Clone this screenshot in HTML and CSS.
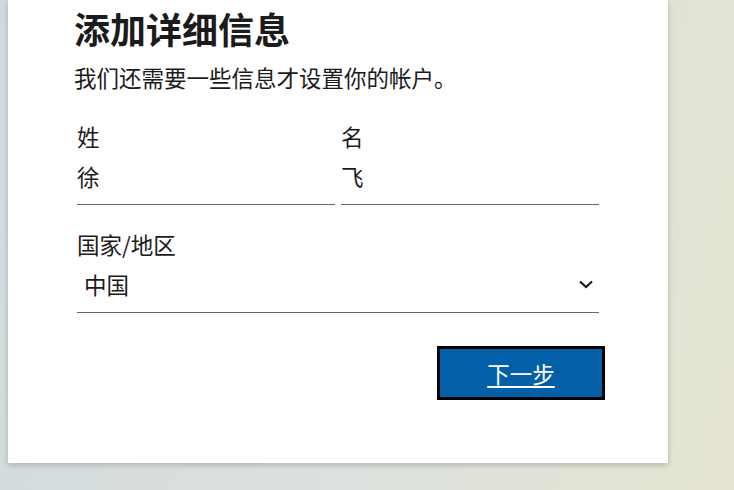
FILE: index.html
```html
<!DOCTYPE html>
<html lang="zh-CN">
<head>
    <meta charset="UTF-8">
    <meta name="viewport" content="width=device-width, initial-scale=1.0">
    <title>添加详细信息</title>
    <link rel="stylesheet" href="styles.css">
</head>
<body>
    <div class="card">
        <h1>添加详细信息</h1>
        <p class="intro">我们还需要一些信息才设置你的帐户。</p>
        <form id="detailsForm" class="fields">
            <div class="name-row">
                <div class="form-group">
                    <label for="lastName">姓</label>
                    <input type="text" id="lastName" name="lastName" value="徐">
                </div>
                <div class="form-group">
                    <label for="firstName">名</label>
                    <input type="text" id="firstName" name="firstName" value="飞">
                </div>
            </div>
            <div class="form-group country">
                <label for="country">国家/地区</label>
                <div class="select-box" id="country">
                    <span>中国</span>
                    <svg width="14" height="9" viewBox="0 0 14 9"><path d="M1 1.5 L7 7 L13 1.5" fill="none" stroke="#1b1b1b" stroke-width="2.2"/></svg>
                </div>
            </div>
        </form>
        <div class="form-actions">
            <button type="submit" form="detailsForm">下一步</button>
        </div>
    </div>
</body>
</html>
```

FILE: styles.css
```css
body {
    font-family: "Noto Sans CJK SC", "Noto Sans", sans-serif;
    margin: 0;
    padding: 0 0 0 8px;
    min-height: 100vh;
    background: linear-gradient(105deg, #d3dade 0%, #dbe1dd 55%, #e5e4d1 100%);
    color: #1b1b1b;
    overflow: hidden;
}
.card {
    width: 660px;
    box-sizing: border-box;
    background: #fff;
    padding: 4px 63px 63px 66px;
    box-shadow: 0 2px 6px rgba(0,0,0,0.2);
}
h1 {
    margin: 0;
    font-size: 36px;
    line-height: 48px;
    font-weight: 700;
}
.intro {
    margin: 10px 0 0 0;
    font-size: 22.5px;
    line-height: 30px;
}
.fields {
    margin: 29px 0 0 3px;
    width: 522px;
}
.name-row {
    display: flex;
    gap: 6px;
}
.name-row .form-group {
    flex: 1;
}
label {
    display: block;
    font-size: 22.5px;
    line-height: 30px;
    margin-bottom: 10px;
}
input[type="text"], .select-box {
    display: block;
    width: 100%;
    box-sizing: border-box;
    height: 44px;
    padding: 0 0 13px 0;
    border: none;
    border-bottom: 1px solid #666;
    font-family: inherit;
    font-size: 22.5px;
    line-height: 30px;
    color: #1b1b1b;
    background: transparent;
    outline: none;
}
.country {
    margin-top: 24px;
}
.select-box {
    display: flex;
    justify-content: space-between;
    align-items: center;
    padding-left: 7px;
    padding-right: 6px;
}
.form-actions {
    display: flex;
    justify-content: flex-end;
    margin-top: 33px;
}
button[type="submit"] {
    width: 168px;
    height: 54px;
    background: #035fa7;
    color: #fff;
    border: 3px solid #000;
    font-family: inherit;
    font-size: 22.5px;
    text-decoration: underline;
    text-underline-offset: 3px;
    cursor: pointer;
}
```
